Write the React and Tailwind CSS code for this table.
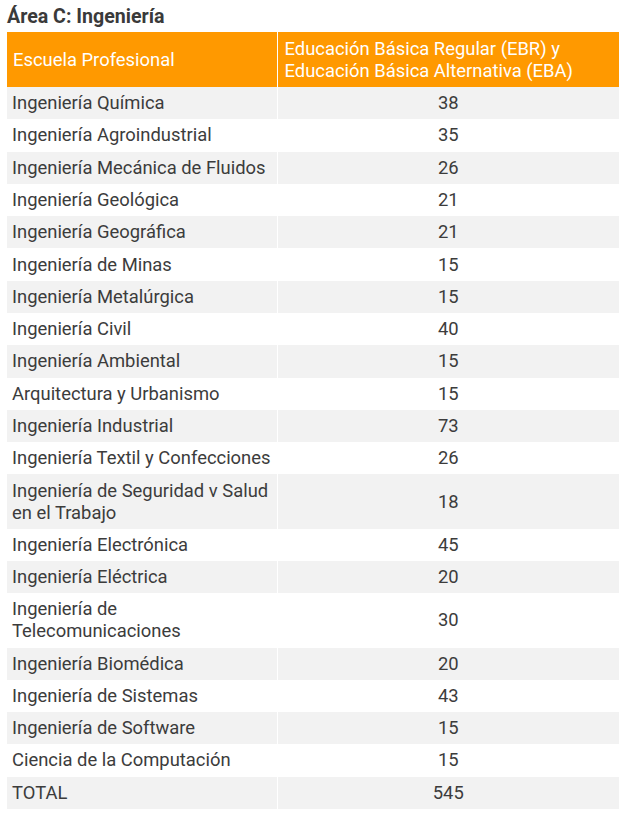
const ROWS = [
  ['Ingeniería Química', 38],
  ['Ingeniería Agroindustrial', 35],
  ['Ingeniería Mecánica de Fluidos', 26],
  ['Ingeniería Geológica', 21],
  ['Ingeniería Geográfica', 21],
  ['Ingeniería de Minas', 15],
  ['Ingeniería Metalúrgica', 15],
  ['Ingeniería Civil', 40],
  ['Ingeniería Ambiental', 15],
  ['Arquitectura y Urbanismo', 15],
  ['Ingeniería Industrial', 73],
  ['Ingeniería Textil y Confecciones', 26],
  ['Ingeniería de Seguridad v Salud en el Trabajo', 18],
  ['Ingeniería Electrónica', 45],
  ['Ingeniería Eléctrica', 20],
  ['Ingeniería de Telecomunicaciones', 30],
  ['Ingeniería Biomédica', 20],
  ['Ingeniería de Sistemas', 43],
  ['Ingeniería de Software', 15],
  ['Ciencia de la Computación', 15],
  ['TOTAL', 545],
]

export default function App() {
  return (
    <div className="bg-white min-h-[816px] font-['Roboto',sans-serif] text-[#3c3c3c]">
      <h2 className="pt-[5px] pl-[7px] mb-[3px] text-[19.6px] leading-[24px] font-bold text-[#3a3a3a]">
        Área C: Ingeniería
      </h2>

      <table className="ml-[7px] w-[612px] border-collapse text-[18.4px] leading-[22px]">
        <thead>
          <tr className="bg-[#ff9900] text-white">
            <th className="w-[270px] px-[6px] py-[5.5px] text-left font-normal border-r border-white">
              Escuela Profesional
            </th>
            <th className="px-[7px] py-[5.5px] text-left font-normal">
              Educación Básica Regular (EBR) y Educación Básica Alternativa (EBA)
            </th>
          </tr>
        </thead>
        <tbody>
          {ROWS.map(([name, n], i) => (
            <tr key={name} className={i % 2 === 0 ? 'bg-[#f2f2f2]' : 'bg-white'}>
              <td className="w-[270px] px-[5px] py-[5.15px] border-r border-white">{name}</td>
              <td className="px-[7px] py-[5.15px] text-center">{n}</td>
            </tr>
          ))}
        </tbody>
      </table>
    </div>
  )
}
